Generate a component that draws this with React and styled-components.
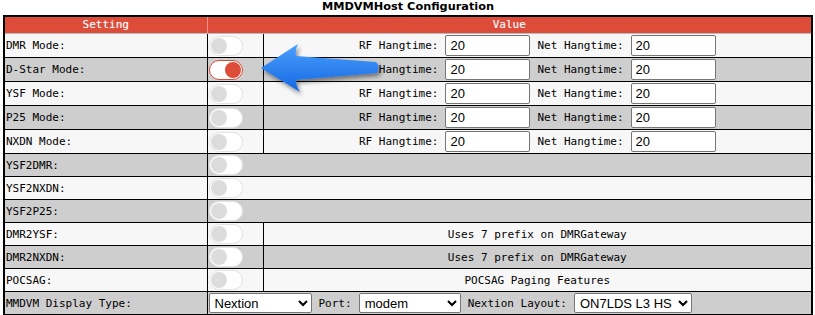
import React from 'react';
import styled, { createGlobalStyle } from 'styled-components';

const GlobalStyle = createGlobalStyle`
  body {
    margin: 0;
    background: #fff;
    font-family: "DejaVu Sans Mono", monospace;
  }
`;

const StyledPage = styled.div`
  position: relative;
  width: 815px;
  height: 315px;
  padding: 0 2px 0 3px;
  box-sizing: border-box;
  overflow: hidden;
`;

const StyledTitle = styled.h2`
  margin: 0;
  height: 15px;
  line-height: 15px;
  text-align: center;
  font: bold 11.3px "DejaVu Sans", sans-serif;
  color: #000;
`;

const StyledTable = styled.table`
  width: 810px;
  border-collapse: collapse;
  table-layout: fixed;
  border: 2px solid #000;
  font-size: 11px;
  color: #000;
`;

const StyledHeadCell = styled.th`
  background: #dd4b39;
  color: #fff;
  font-weight: normal;
  height: 16px;
  padding: 0;
  line-height: 16px;
  border-bottom: 1px solid #bbb;
  border-right: 1px solid #ec9286;
  text-shadow: 0 0 1px rgba(255, 255, 255, 0.4);
`;

const StyledRow = styled.tr`
  background: ${({ $alt }) => ($alt ? '#cecece' : '#f7f7f7')};
`;

const StyledCell = styled.td`
  border: 1px solid #000;
  padding: 1px;
  white-space: nowrap;
  text-align: ${({ $center }) => ($center ? 'center' : 'left')};
  vertical-align: middle;
`;

const StyledSwitch = styled.span`
  display: flex;
  align-items: center;
  justify-content: ${({ $on }) => ($on ? 'flex-end' : 'flex-start')};
  width: 34px;
  height: 20px;
  padding: 0 1px;
  box-sizing: border-box;
  border-radius: 10px;
  background: #fff;
  border: 1px solid ${({ $on }) => ($on ? '#dd4b39' : '#e3e3e3')};
`;

const StyledKnob = styled.span`
  width: 16px;
  height: 16px;
  border-radius: 50%;
  background: ${({ $on }) => ($on ? '#dd4b39' : '#dcdcdc')};
`;

const StyledFields = styled.div`
  display: flex;
  justify-content: ${({ $left }) => ($left ? 'flex-start' : 'center')};
  align-items: center;
  gap: 7px;
`;

const StyledInput = styled.input`
  width: 85px;
  height: 21px;
  box-sizing: border-box;
  border: 1px solid #767676;
  border-radius: 2px;
  padding: 0 4px;
  background: #fff;
  color: #000;
  font: 13px "Liberation Sans", Arial, sans-serif;
`;

const StyledSelect = styled.select`
  width: ${({ $w }) => $w}px;
  height: 20px;
  box-sizing: border-box;
  border: 1px solid #767676;
  border-radius: 2px;
  padding: 0 0 0 1px;
  background: #fff;
  color: #000;
  font: 13px "Liberation Sans", Arial, sans-serif;
`;

const StyledArrow = styled.svg`
  position: absolute;
  left: 0;
  top: 0;
  pointer-events: none;
`;

const Switch = ({ on }) => (
  <StyledSwitch $on={on}>
    <StyledKnob $on={on} />
  </StyledSwitch>
);

const Hangtimes = () => (
  <StyledFields>
    <span>RF Hangtime:</span>
    <StyledInput defaultValue="20" />
    <span>Net Hangtime:</span>
    <StyledInput defaultValue="20" />
  </StyledFields>
);

const modes = [
  { label: 'DMR Mode:' },
  { label: 'D-Star Mode:', on: true },
  { label: 'YSF Mode:' },
  { label: 'P25 Mode:' },
  { label: 'NXDN Mode:' },
];

const bridges = [
  { label: 'YSF2DMR:' },
  { label: 'YSF2NXDN:' },
  { label: 'YSF2P25:' },
  { label: 'DMR2YSF:', note: 'Uses 7 prefix on DMRGateway' },
  { label: 'DMR2NXDN:', note: 'Uses 7 prefix on DMRGateway' },
  { label: 'POCSAG:', note: 'POCSAG Paging Features' },
];

const App = () => (
  <StyledPage>
    <GlobalStyle />
    <StyledTitle>MMDVMHost Configuration</StyledTitle>
    <StyledTable>
      <colgroup>
        <col style={{ width: 203 }} />
        <col style={{ width: 56 }} />
        <col />
      </colgroup>
      <thead>
        <tr>
          <StyledHeadCell>Setting</StyledHeadCell>
          <StyledHeadCell colSpan={2}>Value</StyledHeadCell>
        </tr>
      </thead>
      <tbody>
        {modes.map((m, i) => (
          <StyledRow key={m.label} $alt={i % 2 === 1}>
            <StyledCell>{m.label}</StyledCell>
            <StyledCell>
              <Switch on={m.on} />
            </StyledCell>
            <StyledCell>
              <Hangtimes />
            </StyledCell>
          </StyledRow>
        ))}
        {bridges.map((b, i) => (
          <StyledRow key={b.label} $alt={(i + modes.length) % 2 === 1}>
            <StyledCell>{b.label}</StyledCell>
            <StyledCell colSpan={b.note ? 1 : 2}>
              <Switch />
            </StyledCell>
            {b.note && <StyledCell $center>{b.note}</StyledCell>}
          </StyledRow>
        ))}
        <StyledRow $alt>
          <StyledCell>MMDVM Display Type:</StyledCell>
          <StyledCell colSpan={2}>
            <StyledFields $left>
              <StyledSelect $w={103} defaultValue="Nextion">
                <option>Nextion</option>
              </StyledSelect>
              <span>Port:</span>
              <StyledSelect $w={102} defaultValue="modem">
                <option>modem</option>
              </StyledSelect>
              <span>Nextion Layout:</span>
              <StyledSelect $w={118} defaultValue="ON7LDS L3 HS">
                <option>ON7LDS L3 HS</option>
              </StyledSelect>
            </StyledFields>
          </StyledCell>
        </StyledRow>
      </tbody>
    </StyledTable>
    <StyledArrow width="815" height="315" viewBox="0 0 815 315">
      <defs>
        <linearGradient id="arrowFill" x1="0" y1="0" x2="0" y2="1">
          <stop offset="0" stopColor="#4aa0ff" />
          <stop offset="1" stopColor="#1466e0" />
        </linearGradient>
        <filter id="arrowShadow" x="-20%" y="-30%" width="140%" height="170%">
          <feDropShadow dx="2" dy="3" stdDeviation="2" floodColor="#000" floodOpacity="0.45" />
        </filter>
      </defs>
      <path
        d="M261 68 L298 44 Q295 50 296 56 L376 62 Q381 67 377 73 L296 80 Q296 86 300 92 Z"
        fill="url(#arrowFill)"
        filter="url(#arrowShadow)"
      />
    </StyledArrow>
  </StyledPage>
);

export default App;
